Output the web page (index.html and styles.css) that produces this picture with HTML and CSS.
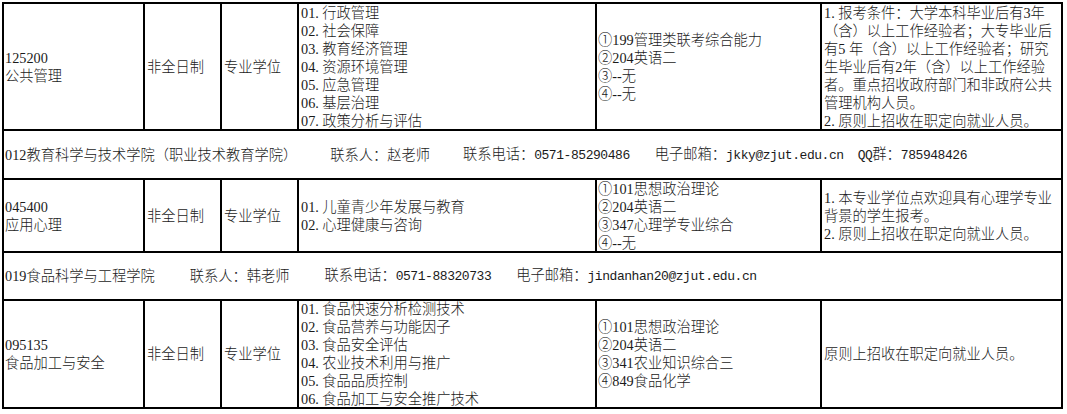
FILE: index.html
```html
<!DOCTYPE html>
<html lang="zh-CN">
<head>
<meta charset="utf-8">
<title>招生专业目录</title>
<link rel="stylesheet" href="styles.css">
</head>
<body>
<div class="sheet">
  <div class="cell c1"><div>125200</div><div>公共管理</div></div>
  <div class="cell"><div>非全日制</div></div>
  <div class="cell"><div>专业学位</div></div>
  <div class="cell">
    <div><span class="no">01.</span>行政管理</div>
    <div><span class="no">02.</span>社会保障</div>
    <div><span class="no">03.</span>教育经济管理</div>
    <div><span class="no">04.</span>资源环境管理</div>
    <div><span class="no">05.</span>应急管理</div>
    <div><span class="no">06.</span>基层治理</div>
    <div><span class="no">07.</span>政策分析与评估</div>
  </div>
  <div class="cell c5">
    <div>①199管理类联考综合能力</div>
    <div>②204英语二</div>
    <div>③--无</div>
    <div>④--无</div>
  </div>
  <div class="cell">
    <div><span class="no">1.</span>报考条件：大学本科毕业后有3年</div>
    <div>（含）以上工作经验者；大专毕业后</div>
    <div>有5 年（含）以上工作经验者；研究</div>
    <div>生毕业后有2年（含）以上工作经验</div>
    <div>者。重点招收政府部门和非政府公共</div>
    <div>管理机构人员。</div>
    <div><span class="no">2.</span>原则上招收在职定向就业人员。</div>
  </div>

  <div class="cell hdr">
    <span>012教育科学与技术学院（职业技术教育学院）</span>
    <span class="gap-l">联系人：赵老师</span>
    <span class="gap-l">联系电话：<span class="mono">0571-85290486</span></span>
    <span class="gap-m">电子邮箱：<span class="mono">jkky@zjut.edu.cn</span></span>
    <span class="gap-s"><span class="mono">QQ</span>群：<span class="mono">785948426</span></span>
  </div>

  <div class="cell c1"><div>045400</div><div>应用心理</div></div>
  <div class="cell"><div>非全日制</div></div>
  <div class="cell"><div>专业学位</div></div>
  <div class="cell">
    <div><span class="no">01.</span>儿童青少年发展与教育</div>
    <div><span class="no">02.</span>心理健康与咨询</div>
  </div>
  <div class="cell c5">
    <div>①101思想政治理论</div>
    <div>②204英语二</div>
    <div>③347心理学专业综合</div>
    <div>④--无</div>
  </div>
  <div class="cell">
    <div><span class="no">1.</span>本专业学位点欢迎具有心理学专业</div>
    <div>背景的学生报考。</div>
    <div><span class="no">2.</span>原则上招收在职定向就业人员。</div>
  </div>

  <div class="cell hdr">
    <span>019食品科学与工程学院</span>
    <span class="gap-xl">联系人：韩老师</span>
    <span class="gap-xl">联系电话：<span class="mono">0571-88320733</span></span>
    <span class="gap-m">电子邮箱：<span class="mono">jindanhan20@zjut.edu.cn</span></span>
  </div>

  <div class="cell c1"><div>095135</div><div>食品加工与安全</div></div>
  <div class="cell"><div>非全日制</div></div>
  <div class="cell"><div>专业学位</div></div>
  <div class="cell">
    <div><span class="no">01.</span>食品快速分析检测技术</div>
    <div><span class="no">02.</span>食品营养与功能因子</div>
    <div><span class="no">03.</span>食品安全评估</div>
    <div><span class="no">04.</span>农业技术利用与推广</div>
    <div><span class="no">05.</span>食品品质控制</div>
    <div><span class="no">06.</span>食品加工与安全推广技术</div>
  </div>
  <div class="cell c5">
    <div>①101思想政治理论</div>
    <div>②204英语二</div>
    <div>③341农业知识综合三</div>
    <div>④849食品化学</div>
  </div>
  <div class="cell">
    <div>原则上招收在职定向就业人员。</div>
  </div>
</div>
</body>
</html>
```
FILE: styles.css
```css
html, body {
  margin: 0;
  padding: 0;
  background: #fff;
}

body {
  font-family: "Liberation Serif", "Noto Sans CJK SC", serif;
  font-size: 14.25px;
  font-weight: 300;
  line-height: 18px;
  color: #1a1a1a;
}

.sheet {
  display: grid;
  grid-template-columns: 141px 77px 77px 298px 225px 241px;
  grid-template-rows: 127px 49px 73px 48px 108px;
  width: max-content;
  margin: 2px 0 0 2px;
  border-left: 2px solid #000;
  border-top: 2px solid #000;
}

.cell {
  box-sizing: border-box;
  border-right: 2px solid #000;
  border-bottom: 2px solid #000;
  display: flex;
  flex-direction: column;
  justify-content: center;
  overflow: hidden;
  white-space: nowrap;
  padding: 0 2px;
}

.c1 {
  padding-left: 1px;
}

.c5 {
  padding-left: 1px;
}

.no {
  margin-right: 3.5px;
}

.hdr {
  grid-column: 1 / -1;
  flex-direction: row;
  align-items: center;
  justify-content: flex-start;
  padding-left: 1px;
}

.mono {
  font-family: "Liberation Mono", monospace;
  font-size: 13px;
  letter-spacing: -0.45px;
}

.gap-xl {
  margin-left: 35px;
}

.gap-l {
  margin-left: 33px;
}

.gap-m {
  margin-left: 25px;
}

.gap-s {
  margin-left: 14px;
}
```
